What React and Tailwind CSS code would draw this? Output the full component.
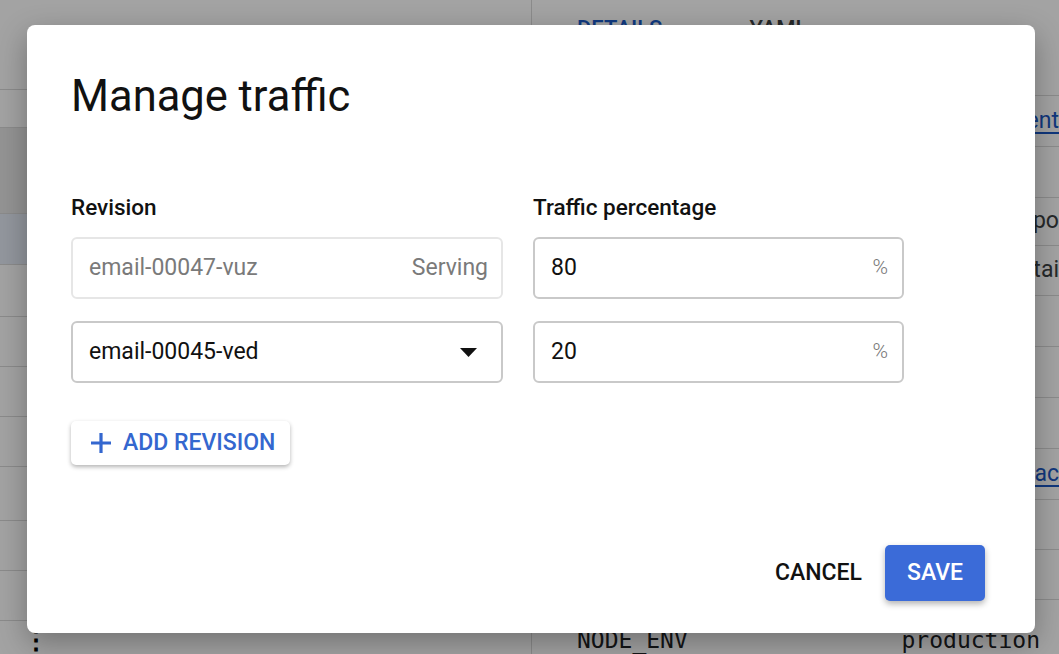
const leftRows = [
    { h: 38 },
    { h: 86, shade: 'bg-[#e8e8e8]' },
    { h: 51, shade: 'bg-[#e6edf7]' },
    { h: 52 },
    { h: 50 },
    { h: 50 },
    { h: 50 },
    { h: 54 },
    { h: 50 },
    { h: 50 },
];

const rightRows = [
    { h: 51, text: 'ent', link: true },
    { h: 51 },
    { h: 48, text: 'po' },
    { h: 50, text: 'tai' },
    { h: 51 },
    { h: 51 },
    { h: 51 },
    { h: 51, text: 'cac', link: true },
    { h: 50 },
    { h: 50 },
];

function Background() {
    return (
        <div className="flex h-[654px] w-full bg-white">
            <div className="flex w-[532px] flex-col border-r border-[#dadada]">
                <div className="h-[90px] border-b border-[#dadada]" />
                {leftRows.map((row, i) => (
                    <div
                        key={i}
                        style={{ height: row.h }}
                        className={`border-b border-[#dadada] ${row.shade ?? ''}`}
                    />
                ))}
                <div className="flex flex-1 items-start pl-[23px] pt-[6px] text-[26px] font-bold leading-none text-black">
                    ⋮
                </div>
            </div>
            <div className="flex flex-1 flex-col">
                <div className="flex h-[96px] items-start gap-[87px] border-b border-[#dadada] pl-[45px] pt-[12px] text-[22px] font-medium">
                    <span className="text-[#1a5cc8]">DETAILS</span>
                    <span className="text-[#3c4043]">YAML</span>
                </div>
                {rightRows.map((row, i) => (
                    <div
                        key={i}
                        style={{ height: row.h }}
                        className="flex items-center justify-end overflow-hidden border-b border-[#dadada] text-[23px]"
                    >
                        {row.text && (
                            <span
                                className={
                                    row.link
                                        ? 'text-[#1a57c4] underline underline-offset-4'
                                        : 'text-[#3c4043]'
                                }
                            >
                                {row.text}
                            </span>
                        )}
                    </div>
                ))}
                <div className="flex flex-1 items-end justify-between pl-[45px] pr-[19px] font-['DejaVu_Sans_Mono',monospace] text-[23px] leading-[28px] text-[#202124]">
                    <span>NODE_ENV</span>
                    <span>production</span>
                </div>
            </div>
        </div>
    );
}

function Field({ children, className = '' }) {
    return (
        <div
            className={`flex h-[62px] items-center justify-between rounded-[6px] border-2 px-[16px] text-[23px] ${className}`}
        >
            {children}
        </div>
    );
}

export default function App() {
    return (
        <div className="relative h-[654px] w-[1059px] overflow-hidden font-['Roboto',sans-serif]">
            <Background />
            <div className="absolute inset-0 bg-black/[0.36]" />

            <div className="absolute left-[27px] top-[25px] flex h-[608px] w-[1008px] flex-col rounded-[8px] bg-white pl-[44px] pr-[50px] shadow-[0_10px_30px_rgba(0,0,0,0.3)]">
                <h1 className="pt-[46px] text-[43.5px] font-normal leading-[52px] text-[#111]">Manage traffic</h1>

                <div className="mt-[70px] flex gap-[30px]">
                    <div className="flex w-[432px] flex-col">
                        <div className="mb-[16px] text-[22.5px] font-medium leading-[28px] text-[#111]">Revision</div>
                        <Field className="border-[#e6e6e6] text-[#7a7a7a]">
                            <span>email-00047-vuz</span>
                            <span className="-mr-[3px]">Serving</span>
                        </Field>
                        <Field className="mt-[22px] border-[#c9c9c9] text-[#111]">
                            <span>email-00045-ved</span>
                            <svg width="17" height="9" viewBox="0 0 17 9" className="mr-[8px]">
                                <path d="M0 0h17L8.5 9z" fill="#111" />
                            </svg>
                        </Field>
                    </div>
                    <div className="flex w-[371px] flex-col">
                        <div className="mb-[16px] text-[22.5px] font-medium leading-[28px] text-[#111]">
                            Traffic percentage
                        </div>
                        <Field className="border-[#c9c9c9] text-[#111]">
                            <span>80</span>
                            <span className="-mr-[2px] text-[21px] font-light text-[#777]">%</span>
                        </Field>
                        <Field className="mt-[22px] border-[#c9c9c9] text-[#111]">
                            <span>20</span>
                            <span className="-mr-[2px] text-[21px] font-light text-[#777]">%</span>
                        </Field>
                    </div>
                </div>

                <div className="mt-[38px]">
                    <button className="flex h-[44px] items-center gap-[12px] rounded-[5px] bg-white pl-[20px] pr-[15px] text-[23px] font-medium text-[#3467cf] shadow-[0_2px_4px_rgba(0,0,0,0.3)]">
                        <svg width="20" height="20" viewBox="0 0 20 20">
                            <path d="M10 0v20M0 10h20" stroke="currentColor" strokeWidth="3.2" />
                        </svg>
                        ADD REVISION
                    </button>
                </div>

                <div className="mt-auto mb-[32px] flex items-center justify-end gap-[23px]">
                    <button className="text-[23px] font-medium text-[#111]">CANCEL</button>
                    <button className="h-[56px] w-[100px] rounded-[5px] bg-[#3b6bd8] text-[23px] font-medium text-white shadow-[0_3px_6px_rgba(0,0,0,0.3)]">
                        SAVE
                    </button>
                </div>
            </div>
        </div>
    );
}
